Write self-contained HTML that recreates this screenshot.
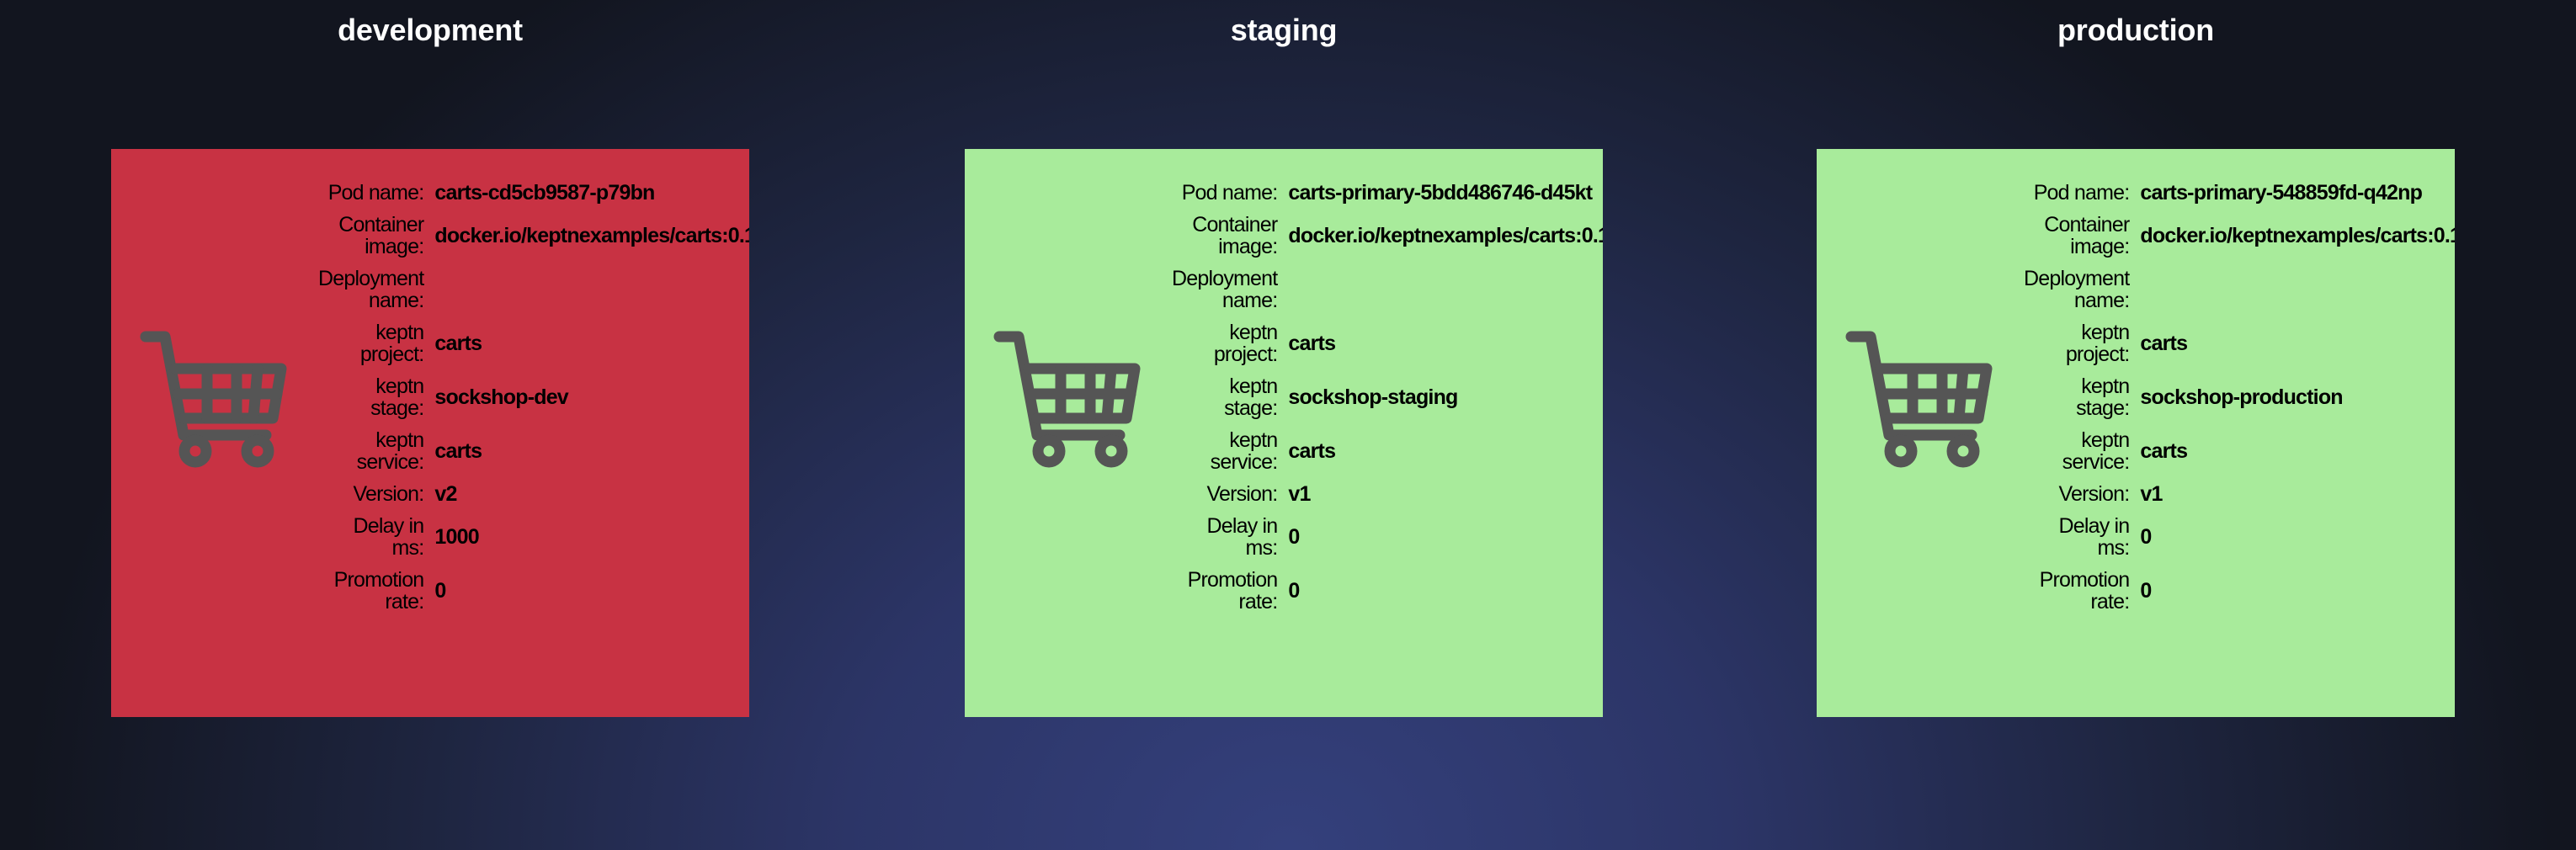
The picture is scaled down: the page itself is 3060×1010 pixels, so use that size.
<!DOCTYPE html>
<html><head><meta charset="utf-8"><style>
html,body{margin:0;padding:0;width:3060px;height:1010px;overflow:hidden}
body{background:radial-gradient(ellipse 1500px 1250px at 1530px 1010px,#34407c 0%,#2c3567 35%,#1e2540 68%,#12151f 100%),#12151f;font-family:"Liberation Sans",Arial,sans-serif;position:relative}
.col{position:absolute;top:0;width:758px}
.title{position:absolute;top:15px;left:0;width:758px;text-align:center;color:#fff;font-weight:bold;font-size:36px;font-family:"Liberation Sans",sans-serif;letter-spacing:-0.2px}
.card{position:absolute;top:177px;left:0;width:758px;height:675px;overflow:hidden}
.red{background:#c83243}.green{background:#a8eb9b}
table{position:absolute;left:0;border-collapse:collapse}
td{padding:6px 0;font-size:25px;line-height:26px;color:#000;vertical-align:middle;white-space:nowrap;letter-spacing:-0.8px}
td.l{text-align:right;width:126px;padding-left:246px;padding-right:13px;white-space:normal}
td.v{font-weight:bold}
svg{position:absolute;left:34px;top:216px}
</style></head><body>

<div class="col" style="left:132px"><div class="title">development</div>
<div class="card red">
<svg width="180" height="170" viewBox="0 0 180 170"><g fill="none" stroke="#555" stroke-width="13" stroke-linejoin="round" stroke-linecap="round"><path d="M7 7H30L52 124H150"/><path d="M42 45H168L158 104H52"/><path d="M80 45V104M115 45V104M140 45L135 104M45 75H163"/><circle cx="66" cy="143" r="13"/><circle cx="140" cy="143" r="13"/></g></svg>
<table style="top:33px">
<tr><td class="l">Pod name:</td><td class="v">carts-cd5cb9587-p79bn</td></tr>
<tr><td class="l">Container image:</td><td class="v">docker.io/keptnexamples/carts:0.10.1</td></tr>
<tr><td class="l">Deployment name:</td><td class="v"></td></tr>
<tr><td class="l">keptn project:</td><td class="v">carts</td></tr>
<tr><td class="l">keptn stage:</td><td class="v">sockshop-dev</td></tr>
<tr><td class="l">keptn service:</td><td class="v">carts</td></tr>
<tr><td class="l">Version:</td><td class="v">v2</td></tr>
<tr><td class="l">Delay in ms:</td><td class="v">1000</td></tr>
<tr><td class="l">Promotion rate:</td><td class="v">0</td></tr>
</table></div></div>

<div class="col" style="left:1146px"><div class="title">staging</div>
<div class="card green">
<svg width="180" height="170" viewBox="0 0 180 170"><g fill="none" stroke="#555" stroke-width="13" stroke-linejoin="round" stroke-linecap="round"><path d="M7 7H30L52 124H150"/><path d="M42 45H168L158 104H52"/><path d="M80 45V104M115 45V104M140 45L135 104M45 75H163"/><circle cx="66" cy="143" r="13"/><circle cx="140" cy="143" r="13"/></g></svg>
<table style="top:33px">
<tr><td class="l">Pod name:</td><td class="v">carts-primary-5bdd486746-d45kt</td></tr>
<tr><td class="l">Container image:</td><td class="v">docker.io/keptnexamples/carts:0.10.1</td></tr>
<tr><td class="l">Deployment name:</td><td class="v"></td></tr>
<tr><td class="l">keptn project:</td><td class="v">carts</td></tr>
<tr><td class="l">keptn stage:</td><td class="v">sockshop-staging</td></tr>
<tr><td class="l">keptn service:</td><td class="v">carts</td></tr>
<tr><td class="l">Version:</td><td class="v">v1</td></tr>
<tr><td class="l">Delay in ms:</td><td class="v">0</td></tr>
<tr><td class="l">Promotion rate:</td><td class="v">0</td></tr>
</table></div></div>

<div class="col" style="left:2158px"><div class="title">production</div>
<div class="card green">
<svg width="180" height="170" viewBox="0 0 180 170"><g fill="none" stroke="#555" stroke-width="13" stroke-linejoin="round" stroke-linecap="round"><path d="M7 7H30L52 124H150"/><path d="M42 45H168L158 104H52"/><path d="M80 45V104M115 45V104M140 45L135 104M45 75H163"/><circle cx="66" cy="143" r="13"/><circle cx="140" cy="143" r="13"/></g></svg>
<table style="top:33px">
<tr><td class="l">Pod name:</td><td class="v">carts-primary-548859fd-q42np</td></tr>
<tr><td class="l">Container image:</td><td class="v">docker.io/keptnexamples/carts:0.10.1</td></tr>
<tr><td class="l">Deployment name:</td><td class="v"></td></tr>
<tr><td class="l">keptn project:</td><td class="v">carts</td></tr>
<tr><td class="l">keptn stage:</td><td class="v">sockshop-production</td></tr>
<tr><td class="l">keptn service:</td><td class="v">carts</td></tr>
<tr><td class="l">Version:</td><td class="v">v1</td></tr>
<tr><td class="l">Delay in ms:</td><td class="v">0</td></tr>
<tr><td class="l">Promotion rate:</td><td class="v">0</td></tr>
</table></div></div>

</body></html>
